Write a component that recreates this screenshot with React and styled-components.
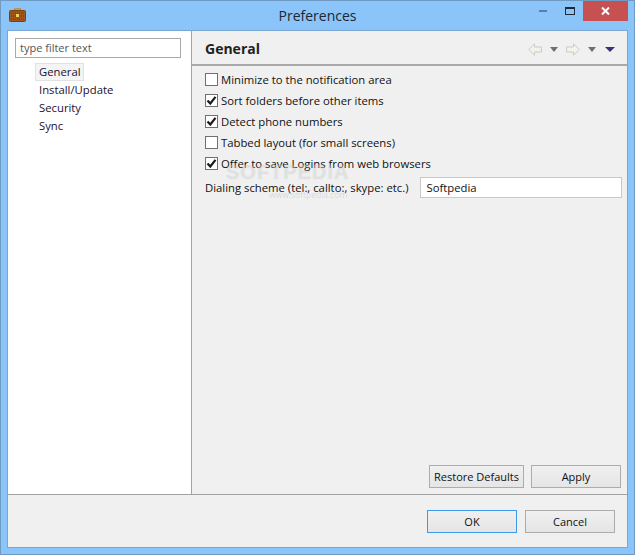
import React from 'react'
import styled, { createGlobalStyle } from 'styled-components'

const GlobalStyle = createGlobalStyle`
  html, body {
    margin: 0;
    padding: 0;
    background: #8ac4f8;
  }
  * {
    box-sizing: border-box;
  }
`

const Window = styled.div`
  width: 635px;
  height: 555px;
  display: flex;
  flex-direction: column;
  position: relative;
  overflow: hidden;
  background: #8ac4f8;
  border: 1px solid #6f9ac4;
  padding: 0 6px 6px 6px;
  font-family: "Open Sans", "Noto Sans", sans-serif;
  font-size: 11.3px;
  color: #111;
`

const TitleBar = styled.div`
  height: 29px;
  flex-shrink: 0;
  position: relative;
  display: flex;
  align-items: center;
  justify-content: center;
  font-size: 14px;
  color: #1c2733;
  padding-bottom: 1px;
`

const AppIcon = styled.svg`
  position: absolute;
  left: 2px;
  top: 7px;
`

const WindowControls = styled.div`
  position: absolute;
  top: 0;
  right: 0;
  display: flex;
  align-items: flex-start;
`

const ControlButton = styled.div`
  width: ${p => p.$w}px;
  height: ${p => p.$h || 19}px;
  display: flex;
  align-items: center;
  justify-content: center;
  background: ${p => p.$close ? '#c75050' : 'transparent'};
  color: #fff;
`

const Body = styled.div`
  flex: 1;
  display: flex;
  flex-direction: column;
  border: 1px solid #7ba6d2;
  background: #f0f0f0;
  min-height: 0;
`

const Main = styled.div`
  flex: 1;
  display: flex;
  min-height: 0;
  border-bottom: 1px solid #a3a3a3;
`

const Sidebar = styled.div`
  width: 184px;
  flex-shrink: 0;
  background: #fff;
  border-right: 1px solid #a3a3a3;
  padding: 7px 10px 0 7px;
`

const FilterInput = styled.div`
  height: 20px;
  border: 1px solid #a9a9a9;
  padding: 0 4px;
  font-size: 11px;
  line-height: 18px;
  color: #555;
  background: #fff;
`

const Tree = styled.div`
  display: flex;
  flex-direction: column;
  margin-top: 5px;
  padding-left: 20px;
  align-items: flex-start;
`

const TreeItem = styled.div`
  height: 18px;
  line-height: 16px;
  padding: 0 2px 0 3px;
  border: 1px solid ${p => p.$selected ? '#e2e2e2' : 'transparent'};
  background: ${p => p.$selected ? '#f4f4f4' : 'transparent'};
  color: #1b1030;
`

const Content = styled.div`
  flex: 1;
  display: flex;
  flex-direction: column;
  min-width: 0;
`

const Header = styled.div`
  height: 35px;
  flex-shrink: 0;
  display: flex;
  align-items: center;
  justify-content: space-between;
  padding: 2px 12px 0 13px;
  border-bottom: 2px solid #a9a9a9;
`

const Heading = styled.div`
  font-size: 14px;
  font-weight: 700;
  color: #222;
`

const HistoryBar = styled.div`
  display: flex;
  align-items: center;
  gap: 8px;
  padding-top: 1px;
`

const MenuCaret = styled.span`
  display: flex;
  margin-left: 1px;
`

const Page = styled.div`
  flex: 1;
  display: flex;
  flex-direction: column;
  padding: 3px 5px 0 13px;
  min-height: 0;
`

const CheckRow = styled.label`
  height: 21px;
  display: flex;
  align-items: center;
  gap: 3px;
`

const Box = styled.span`
  width: 13px;
  height: 13px;
  flex-shrink: 0;
  background: #fff;
  border: 1px solid #707070;
  display: flex;
  align-items: center;
  justify-content: center;
`

const SchemeRow = styled.div`
  display: flex;
  align-items: center;
  gap: 12px;
  margin-top: 3px;
  white-space: nowrap;
`

const SchemeInput = styled.div`
  flex: 1;
  height: 21px;
  line-height: 19px;
  padding: 0 5px;
  background: #fff;
  border: 1px solid #c8c8c8;
`

const PageActions = styled.div`
  margin-top: auto;
  display: flex;
  justify-content: flex-end;
  gap: 7px;
  padding: 0 1px 6px 0;
`

const Footer = styled.div`
  height: 52px;
  flex-shrink: 0;
  display: flex;
  justify-content: flex-end;
  gap: 8px;
  padding: 15px 12px 0 0;
`

const Button = styled.div`
  width: ${p => p.$w}px;
  height: 23px;
  display: flex;
  align-items: center;
  justify-content: center;
  white-space: nowrap;
  font-size: 11px;
  border: 1px solid ${p => p.$primary ? '#3c9ae8' : '#acacac'};
  background: linear-gradient(#f0f0f0, #e5e5e5);
  color: #111;
`

const Watermark = styled.div`
  position: absolute;
  left: 225px;
  top: 160px;
  font-size: 20px;
  font-weight: 700;
  letter-spacing: 1px;
  color: rgba(255, 255, 255, 0.3);
  text-shadow: 0 0 1px rgba(110, 110, 110, 0.22);
  pointer-events: none;
  font-family: "Liberation Sans", sans-serif;
`

const WatermarkUrl = styled.div`
  position: absolute;
  left: 268px;
  top: 188px;
  font-size: 8.5px;
  color: rgba(120, 120, 120, 0.22);
  pointer-events: none;
`

function Check({ checked }) {
  return (
    <Box>
      {checked && (
        <svg width="11" height="11" viewBox="0 0 11 11">
          <path d="M1.5 5.5 L4.3 8.5 L9.5 1.8" fill="none" stroke="#1a1a1a" strokeWidth="2.2" />
        </svg>
      )}
    </Box>
  )
}

function BackArrow({ flip }) {
  return (
    <svg width="14" height="13" viewBox="0 0 14 13" style={flip ? { transform: 'scaleX(-1)' } : undefined}>
      <path d="M6.5 .8 L.8 6.5 L6.5 12.2 V9 H13.4 V4 H6.5 Z" fill="#f3f3ea" stroke="#c9cbc4" strokeWidth="1" />
    </svg>
  )
}

function Caret({ color = '#6f6f6f', w = 8 }) {
  return (
    <svg width={w} height="5" viewBox={`0 0 ${w} 5`}>
      <path d={`M0 0 H${w} L${w / 2} 5 Z`} fill={color} />
    </svg>
  )
}

const options = [
  { label: 'Minimize to the notification area', checked: false },
  { label: 'Sort folders before other items', checked: true },
  { label: 'Detect phone numbers', checked: true },
  { label: 'Tabbed layout (for small screens)', checked: false },
  { label: 'Offer to save Logins from web browsers', checked: true },
]

export default function App() {
  return (
    <Window>
      <GlobalStyle />
      <TitleBar>
        <AppIcon width="17" height="14" viewBox="0 0 17 14">
          <path d="M5.5 3 V.8 H11.5 V3" fill="none" stroke="#b98a3a" strokeWidth="1.3" />
          <rect x="0.5" y="2.5" width="16" height="11" rx="1" fill="#a0561a" stroke="#7a4212" />
          <path d="M2 5 H15 M2 8 H15 M2 11 H15" stroke="#6f3a10" strokeWidth="1" strokeDasharray="1 1" />
          <rect x="7" y="6" width="3" height="3" fill="#f2d060" />
        </AppIcon>
        Preferences
        <WindowControls>
          <ControlButton $w={26}>
            <svg width="8" height="2"><rect width="8" height="2" fill="#5a7fa3" /></svg>
          </ControlButton>
          <ControlButton $w={27}>
            <svg width="10" height="8"><rect x="0.5" y="0.5" width="9" height="7" fill="none" stroke="#1f2a35" /><rect width="10" height="2" fill="#1f2a35" /></svg>
          </ControlButton>
          <ControlButton $w={45} $h={20} $close>
            <svg width="9" height="8" viewBox="0 0 9 8"><path d="M1 .5 L8 7.5 M8 .5 L1 7.5" stroke="#fff" strokeWidth="2" /></svg>
          </ControlButton>
        </WindowControls>
      </TitleBar>
      <Body>
        <Main>
          <Sidebar>
            <FilterInput>type filter text</FilterInput>
            <Tree>
              <TreeItem $selected>General</TreeItem>
              <TreeItem>Install/Update</TreeItem>
              <TreeItem>Security</TreeItem>
              <TreeItem>Sync</TreeItem>
            </Tree>
          </Sidebar>
          <Content>
            <Header>
              <Heading>General</Heading>
              <HistoryBar>
                <BackArrow />
                <Caret />
                <BackArrow flip />
                <Caret />
                <MenuCaret><Caret color="#3a2f78" w={10} /></MenuCaret>
              </HistoryBar>
            </Header>
            <Page>
              {options.map(o => (
                <CheckRow key={o.label}>
                  <Check checked={o.checked} />
                  {o.label}
                </CheckRow>
              ))}
              <SchemeRow>
                Dialing scheme (tel:, callto:, skype: etc.)
                <SchemeInput>Softpedia</SchemeInput>
              </SchemeRow>
              <PageActions>
                <Button $w={95}>Restore Defaults</Button>
                <Button $w={90}>Apply</Button>
              </PageActions>
            </Page>
          </Content>
        </Main>
        <Footer>
          <Button $w={90} $primary>OK</Button>
          <Button $w={90}>Cancel</Button>
        </Footer>
      </Body>
      <Watermark>SOFTPEDIA</Watermark>
      <WatermarkUrl>www.softpedia.com</WatermarkUrl>
    </Window>
  )
}
